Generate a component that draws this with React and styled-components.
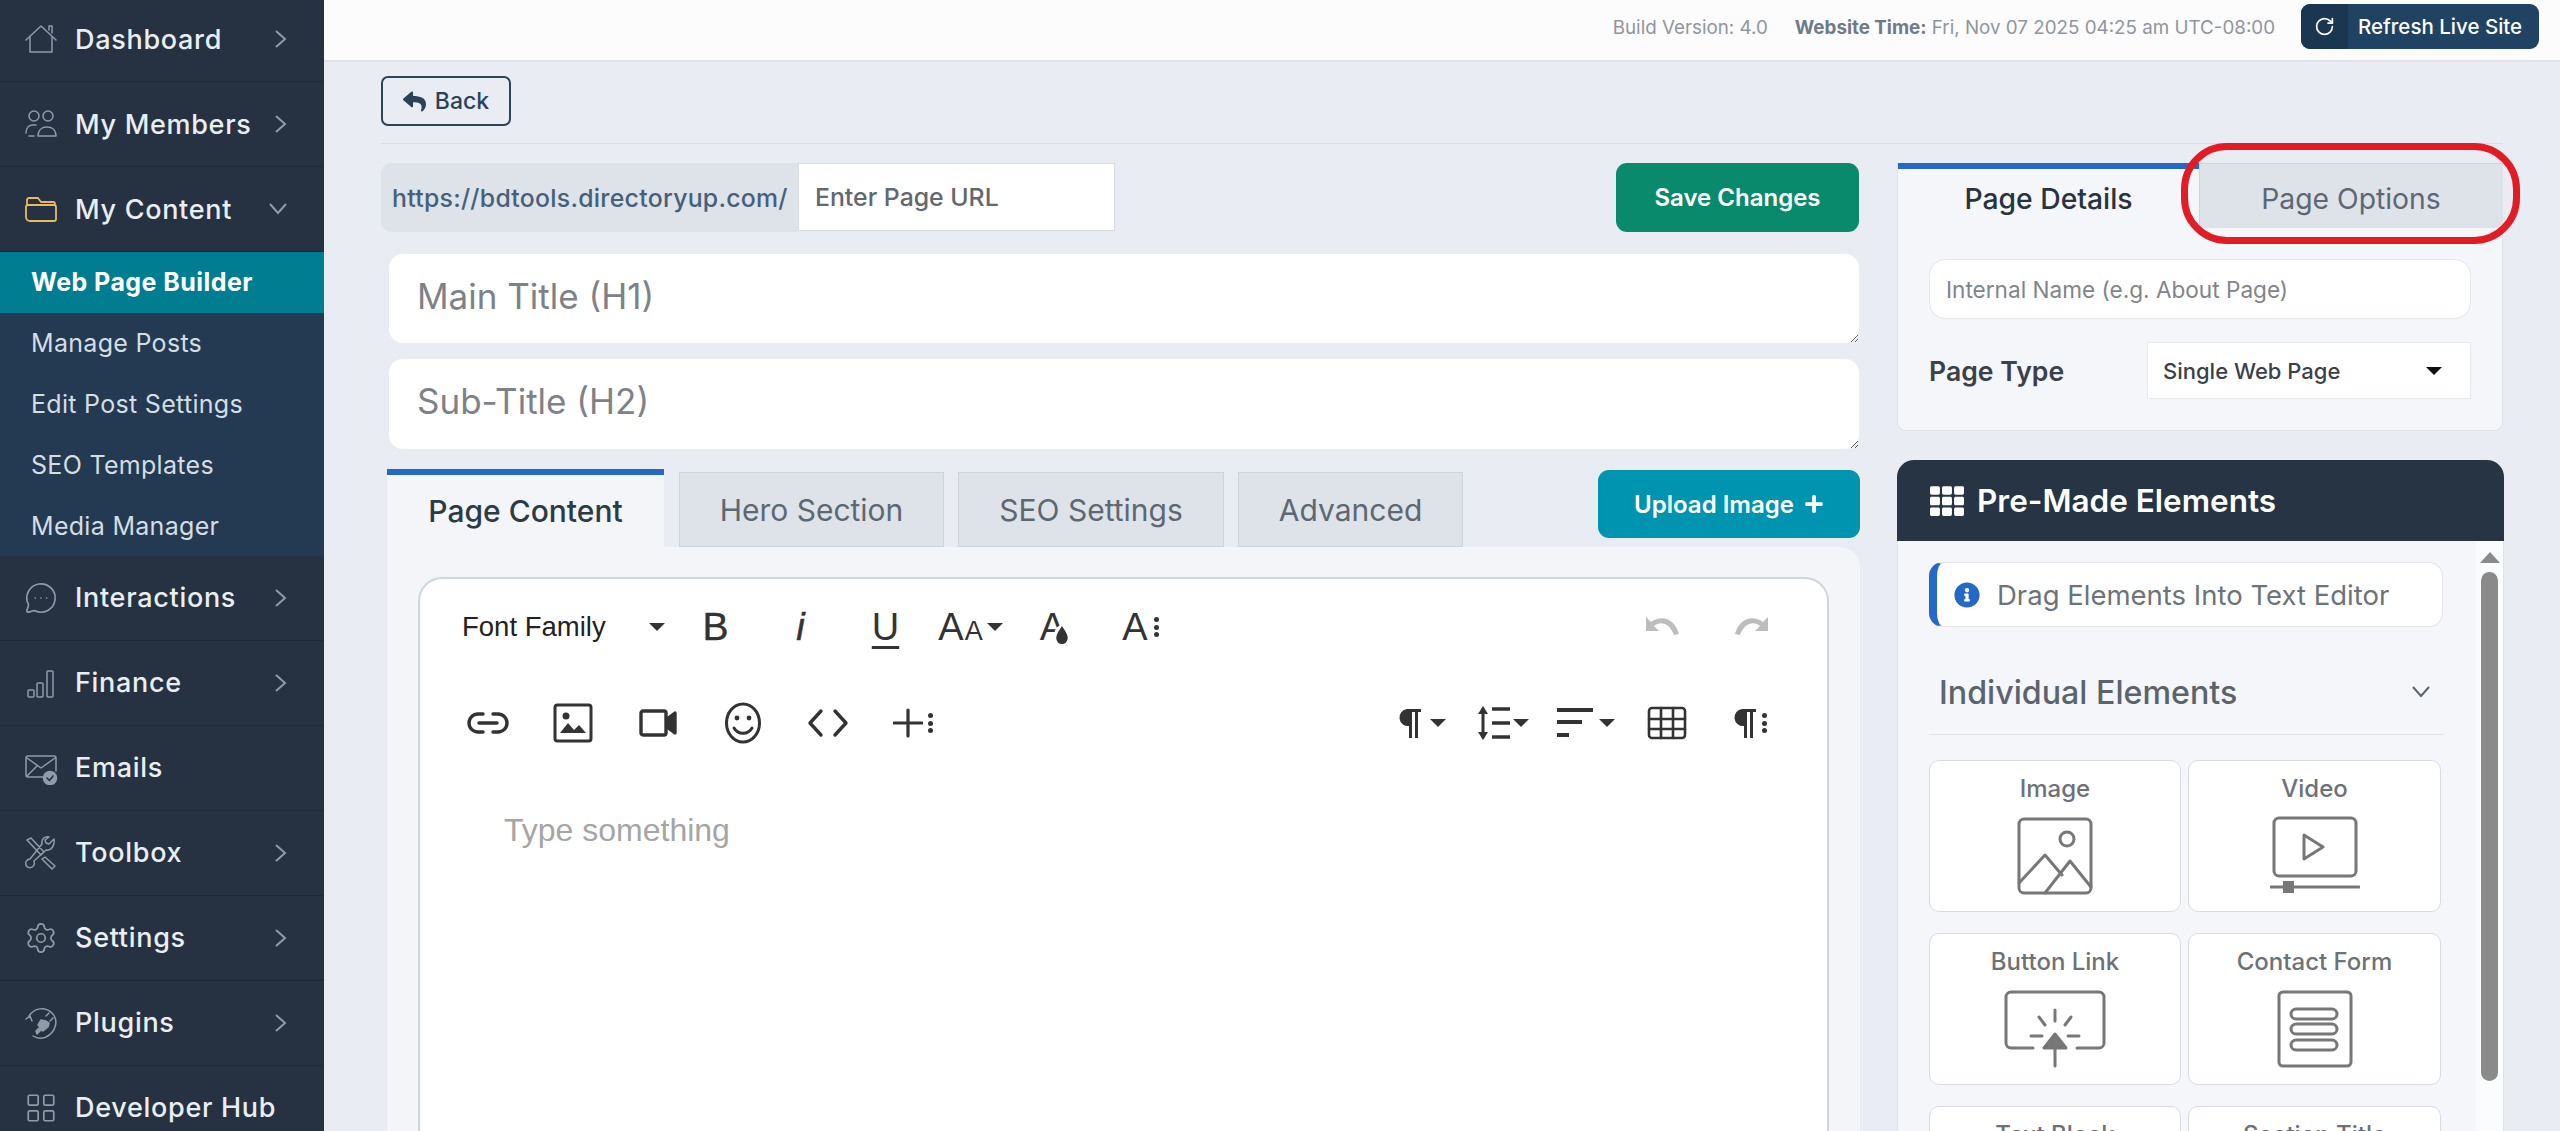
import React from "react";
import styled, { createGlobalStyle } from "styled-components";
import { FaReply, FaPlus, FaInfoCircle, FaTh } from "react-icons/fa";
import { Settings, MessageCircleMore, LayoutGrid, RotateCw } from "lucide-react";

const Global = createGlobalStyle`
  html, body { margin: 0; padding: 0; height: 100%; background: #e9edf3; }
  * { box-sizing: border-box; }
  body { font-family: Inter, "Noto Sans", sans-serif; overflow: hidden; }
`;

const Shell = styled.div`display: flex; height: 100vh; overflow: hidden;`;
const Sidebar = styled.nav`width: 324px; flex: none; background: #263241; overflow: hidden; display: flex; flex-direction: column;`;
const NavList = styled.div`margin-top: -3px; display: flex; flex-direction: column;`;
const NavRow = styled.div`
  height: 85px; flex: none; display: flex; align-items: center; padding: 0 37px 0 24px;
  border-bottom: 1px solid #1f2a37; color: #e9eef3; font-size: 27px; font-weight: 500; letter-spacing: .7px;
`;
const NavIcon = styled.span`
  width: 34px; height: 34px; flex: none; margin-right: 17px; display: flex; align-items: center; justify-content: center;
  color: ${p => p.$color || "#8f9ba7"};
`;
const NavLabel = styled.span`flex: 1; white-space: nowrap;`;
const SubNav = styled.div`background: #243a52; display: flex; flex-direction: column;`;
const SubItem = styled.div`
  height: 60.8px; display: flex; align-items: center; padding-left: 31px; white-space: nowrap;
  font-size: 25px; letter-spacing: ${p => p.$active ? ".45px" : ".3px"};
  color: ${p => p.$active ? "#ffffff" : "#d5dde4"}; font-weight: ${p => p.$active ? 700 : 400};
  background: ${p => p.$active ? "#007d90" : "transparent"};
`;

const Main = styled.div`flex: 1; min-width: 0; display: flex; flex-direction: column;`;
const TopBar = styled.header`
  height: 62px; flex: none; background: #fcfcfd; border-bottom: 2px solid #e0e3e8;
  display: flex; align-items: center; justify-content: flex-end; padding: 0 21px 6px 0;
  font-size: 18.8px; color: #8f969d; white-space: nowrap;
`;
const BuildInfo = styled.span`margin-right: 27px;`;
const TimeInfo = styled.span`margin-right: 26px;`;
const Strong = styled.b`font-weight: 700; color: #6f7a86;`;
const RefreshButton = styled.div`
  display: flex; height: 45px; width: 238px; border-radius: 9px; overflow: hidden; background: #204363; color: #fff;
  font-size: 20.5px; font-weight: 500; align-items: stretch; align-self: flex-start; margin-top: 4px;
`;
const RefreshIcon = styled.span`width: 47px; background: #1a3650; display: flex; align-items: center; justify-content: center;`;
const RefreshText = styled.span`flex: 1; display: flex; align-items: center; padding-left: 10px; white-space: nowrap;`;

const Body = styled.div`flex: 1; min-height: 0; display: flex; flex-direction: column; padding: 14px 57px 0;`;
const BackRow = styled.div`padding-bottom: 17px; border-bottom: 1px solid #d9dee4; flex: none;`;
const BackButton = styled.div`
  width: 130px; height: 50px; border: 2px solid #2c4357; border-radius: 7px; display: flex; align-items: center; justify-content: center;
  gap: 9px; color: #2c4357; font-size: 23px; font-weight: 500;
`;
const Columns = styled.div`flex: 1; min-height: 0; display: grid; grid-template-columns: 1478px 606px; column-gap: 38px; margin-top: 19px;`;
const LeftCol = styled.div`display: flex; flex-direction: column; min-height: 0;`;
const RightCol = styled.div`display: flex; flex-direction: column; min-height: 0;`;

const UrlRow = styled.div`display: flex; justify-content: space-between; height: 69px; flex: none;`;
const UrlGroup = styled.div`display: flex; height: 69px;`;
const UrlPrefix = styled.div`
  width: 417px; background: #dde3e9; border-radius: 10px 0 0 10px; display: flex; align-items: center; padding-left: 11px;
  color: #476079; font-size: 24.8px; font-weight: 500; letter-spacing: .27px; white-space: nowrap;
`;
const UrlInput = styled.input`
  width: 317px; height: 68px; border: 1px solid #d7dce2; background: #fff; padding: 0 16px; font: 500 24.8px Inter, sans-serif; outline: none;
  &::placeholder { color: #62686e; opacity: 1; }
`;
const SolidButton = styled.div`
  display: flex; align-items: center; justify-content: center; gap: 10px; border-radius: 11px; color: #fff; font-size: 24px; font-weight: 600;
  width: ${p => p.$w}px; height: ${p => p.$h}px; background: ${p => p.$bg}; white-space: nowrap; flex: none;
`;
const TitleField = styled.textarea`
  display: block; flex: none; width: 1470px; height: ${p => p.$h}px; margin: ${p => p.$mt}px 0 0 8px; border: none; border-radius: 14px; background: #fff;
  padding: 21px 28px; font: 400 35px Inter, sans-serif; resize: vertical; outline: none;
  &::placeholder { color: #7e8287; opacity: 1; }
`;
const TabRow = styled.div`display: flex; align-items: flex-start; justify-content: space-between; height: 77px; margin: 21px -1px 0 6px; flex: none;`;
const TabList = styled.div`display: flex; align-items: flex-end; gap: 14px; height: 77px;`;
const ContentTab = styled.div`
  width: ${p => p.$w}px; height: ${p => p.$active ? 78 : 75}px; display: flex; align-items: center; justify-content: center;
  font-size: 30px; font-weight: ${p => p.$active ? 500 : 400}; white-space: nowrap;
  background: ${p => p.$active ? "#f3f5f9" : "#dde3e9"}; color: ${p => p.$active ? "#2c3a46" : "#5d6872"};
  border: ${p => p.$active ? "none" : "1px solid #cdd5dc"}; border-top: ${p => p.$active ? "6px solid #2469c7" : "1px solid #cdd5dc"};
  margin-right: ${p => p.$active ? 1 : 0}px;
`;
const ContentCard = styled.div`flex: 1; min-height: 0; margin: 0 -1px 0 6px; background: #f3f5f9; border-radius: 0 20px 0 0; padding: 30px 31px 0; display: flex;`;
const Editor = styled.div`flex: 1; background: #fff; border: 2px solid #d0d5db; border-bottom: none; border-radius: 24px 24px 0 0;`;
const ToolRow = styled.div`display: flex; align-items: center; height: 96px; padding: 0 ${p => p.$right}px 0 25px; color: #333;`;
const Spacer = styled.div`flex: 1;`;
const Tool = styled.div`
  width: ${p => p.$w || 85}px; height: 60px; flex: none; display: flex; align-items: center; justify-content: center; gap: ${p => p.$gap ?? 5}px;
  color: ${p => p.$muted ? "#bdbdbd" : "#333"}; font-family: "Liberation Sans", Arial, sans-serif;
  font-size: 38px;
`;
const FontPick = styled.div`
  width: 228px; padding: 0 8px 0 17px; display: flex; justify-content: space-between; align-items: center; flex: none;
  font: 400 27.5px "Liberation Sans", Arial, sans-serif; color: #222;
`;
const Caret = styled.i`
  display: inline-block; width: 0; height: 0; border-left: 8px solid transparent; border-right: 8px solid transparent;
  border-top: 8px solid #333; flex: none;
`;
const BoldMark = styled.span`font-size: 39px; -webkit-text-stroke: .4px #333;`;
const ItalicMark = styled.span`font-style: italic; font-size: 38px; -webkit-text-stroke: .5px #333;`;
const UnderMark = styled.span`font-size: 38px; text-decoration: underline; text-underline-offset: 6px; text-decoration-thickness: 3px;`;
const SmallA = styled.span`font-size: 27px; margin-left: 1px;`;
const TightRow = styled.span`display: flex; align-items: baseline;`;
const CenterRow = styled.span`display: flex; align-items: center; gap: 4px;`;
const DropMark = styled.span`position: relative; display: block; line-height: 44px; padding-right: 6px;`;
const DropSpot = styled.span`position: absolute; left: 14px; top: 20px; display: flex; background: #fff; border-radius: 50%; padding: 0 1px;`;
const Dots = styled.span`display: flex; flex-direction: column; gap: 2.5px; margin-left: 1px;`;
const Dot = styled.i`display: block; width: 5px; height: 5px; border-radius: 50%; background: #333;`;
const EditorHint = styled.div`
  padding: 40px 0 0 84px; font: 400 32px/38px "Liberation Sans", Arial, sans-serif; color: #a5a5a5;
`;

const DetailsCard = styled.section`
  height: 268px; flex: none; position: relative; background: #f4f6f9; border: 1px solid #dfe3e8; border-top: none; border-radius: 0 0 8px 8px;
`;
const DetailTabs = styled.div`display: grid; grid-template-columns: 301px 1fr; height: 65px;`;
const DetailTab = styled.div`
  display: flex; align-items: center; justify-content: center; font-size: 28.3px; white-space: nowrap; font-weight: ${p => p.$active ? 500 : 400};
  color: ${p => p.$active ? "#27333e" : "#5d6872"}; background: ${p => p.$active ? "transparent" : "#dde3e9"};
  border-top: ${p => p.$active ? "6px solid #2469c7" : "1px solid #cdd5dc"};
  border-left: ${p => p.$active ? "none" : "1px solid #cdd5dc"};
  padding-top: ${p => p.$active ? 1 : 5}px;
`;
const Highlight = styled.div`
  position: absolute; left: 283px; top: -20px; width: 339px; height: 101px; border: 7px solid #e11c25; border-radius: 46px; pointer-events: none;
`;
const DetailBody = styled.div`padding: 31px 31px 0 31px; display: flex; flex-direction: column;`;
const NameInput = styled.input`
  width: 542px; height: 60px; border: 1px solid #e3e6ea; border-radius: 16px; background: #fff; padding: 0 16px; font: 400 22.6px Inter, sans-serif; outline: none;
  &::placeholder { color: #7f858a; opacity: 1; }
`;
const TypeRow = styled.div`display: flex; align-items: center; justify-content: space-between; margin-top: 23px; width: 542px;`;
const TypeLabel = styled.span`font-size: 26.6px; font-weight: 600; color: #3a4148;`;
const TypeSelect = styled.div`
  width: 324px; height: 57px; background: #fff; border: 1px solid #e6e9ed; display: flex; align-items: center; justify-content: space-between;
  padding: 0 28px 0 15px; font-size: 22px; font-weight: 500; color: #3a4148;
`;
const BlackCaret = styled(Caret)`border-top-color: #111;`;

const Panel = styled.section`flex: 1; min-height: 0; margin-top: 29px; display: flex; flex-direction: column; width: 607px;`;
const PanelHead = styled.div`
  height: 81px; flex: none; background: #263443; border-radius: 17px 17px 0 0; color: #fff; display: flex; align-items: center;
  padding-left: 33px; gap: 13px; font-size: 31.5px; font-weight: 600; white-space: nowrap;
`;
const PanelBody = styled.div`flex: 1; min-height: 0; display: flex; background: #f4f6f9; border-left: 1px solid #dfe3e8; border-right: 1px solid #dfe3e8; overflow: hidden;`;
const PanelContent = styled.div`flex: 1; min-width: 0; padding: 21px 34px 0 31px; display: flex; flex-direction: column; overflow: hidden;`;
const ScrollTrack = styled.div`width: 27px; flex: none; background: #fbfcfd; display: flex; flex-direction: column; align-items: center; padding-top: 11px;`;
const ScrollArrow = styled.i`width: 0; height: 0; border-left: 10px solid transparent; border-right: 10px solid transparent; border-bottom: 11px solid #8a8a8a;`;
const ScrollThumb = styled.div`width: 17px; height: 509px; margin-top: 9px; border-radius: 9px; background: #8a8a8a;`;
const InfoBox = styled.div`
  height: 65px; flex: none; width: 514px; background: #fff; border: 1px solid #e1e5ea; border-left: 8px solid #2469c7; border-radius: 14px; display: flex; align-items: center;
  padding-left: 17px; gap: 17px; color: #6c7379; font-size: 27.5px; white-space: nowrap;
`;
const SectionHead = styled.div`
  height: 108px; flex: none; width: 515px; border-bottom: 1px solid #dfe3e8; display: flex; align-items: center; justify-content: space-between;
  padding: 23px 14px 0 10px; font-size: 32.2px; font-weight: 500; color: #5b646d;
`;
const ElementGrid = styled.div`display: grid; grid-template-columns: 252px 253px; grid-auto-rows: 152px; column-gap: 7px; row-gap: 21px; margin-top: 25px;`;
const ElementCard = styled.div`
  background: #fff; border: 1px solid #d8dce1; border-radius: 10px; display: flex; flex-direction: column; align-items: center;
  font-size: 24px; font-weight: 500; color: #6c7278; padding-top: 13px; white-space: nowrap;
`;
const ElementIcon = styled.div`height: 80px; margin-top: 13px; display: flex; align-items: center; justify-content: center; color: #777;`;

const Ic = ({ w = 34, h = 34, vb, sw = 1.5, children, fill = "none" }) => (
  <svg width={w} height={h} viewBox={vb || `0 0 ${w} ${h}`} fill={fill} stroke={fill === "none" ? "currentColor" : "none"} strokeWidth={sw} strokeLinecap="round" strokeLinejoin="round">{children}</svg>
);

const HomeIcon = () => <Ic><path d="M2 18 17 4l15 14M6 15v15h22V15M25 8V4h3v7" /></Ic>;
const UsersIcon = () => <Ic><circle cx="10" cy="9" r="5" /><circle cx="24" cy="9" r="5" /><path d="M2 26c0-5 3-8 7-8h3M5 29h5M14 29c0-6 4-9 9-9s9 3 9 9z" /></Ic>;
const FolderIcon = () => <Ic sw={1.8}><path d="M3 12V8a2 2 0 0 1 2-2h9l3 4h12a2 2 0 0 1 2 2M2 15a2 2 0 0 1 2-2h26a2 2 0 0 1 2 2v12a2 2 0 0 1-2 2H6a4 4 0 0 1-4-4z" /></Ic>;
const BarsIcon = () => <Ic><rect x="4" y="24" width="6" height="7" rx="1" /><rect x="13" y="17" width="6" height="14" rx="1" /><rect x="23" y="5" width="6" height="26" rx="1" /></Ic>;
const MailIcon = () => (
  <Ic><path d="M22 26H4a2 2 0 0 1-2-2V7a2 2 0 0 1 2-2h26a2 2 0 0 1 2 2v13M3 7l14 10L31 7M3 25l10-10" /><circle cx="26" cy="27" r="6.5" fill="currentColor" /><path d="m23 27 2.5 2.5L29 25" stroke="#263241" strokeWidth="1.6" /></Ic>
);
const ToolsIcon = () => (
  <Ic><path d="M3 4 7 2l13 14-3 3zM30 3l-5 5-3-1-1-3 4-3c-4-1-8 2-7 7L6 23c-3 0-5 3-4 6s6 4 8 0c1-2 0-3 0-4L22 14c5 1 9-4 8-11zM21 21l10 9-3 3-10-10z" /></Ic>
);
const PlugIcon = () => (
  <Ic><path d="M5 10C10 2 21 0 28 7c7 7 4 19-6 24-5 2-10 1-13-1M2 13l4-3 2 5" /><path d="m12 25 4-4-2-2 3-5 5 1 3 2-1 4-5 4-2-1-4 4z" fill="currentColor" /><path d="m22 10 3-3M26 15l3-3" /></Ic>
);
const Chevron = ({ down, color = "#8f9ba7" }) => (
  <svg width={down ? 18 : 12} height={down ? 12 : 18} viewBox={down ? "0 0 18 12" : "0 0 12 18"} fill="none" stroke={color} strokeWidth="2">
    <path d={down ? "M1 1l8 9 8-9" : "M1 1l9 8-9 8"} />
  </svg>
);

const navTop = [
  ["Dashboard", <HomeIcon />, true],
  ["My Members", <UsersIcon />, true],
];
const navBottom = [
  ["Interactions", <MessageCircleMore size={36} strokeWidth={1.2} />, true],
  ["Finance", <BarsIcon />, true],
  ["Emails", <MailIcon />, false],
  ["Toolbox", <ToolsIcon />, true],
  ["Settings", <Settings size={34} strokeWidth={1.2} />, true],
  ["Plugins", <PlugIcon />, true],
  ["Developer Hub", <LayoutGrid size={34} strokeWidth={1.2} />, false],
];
const subItems = ["Web Page Builder", "Manage Posts", "Edit Post Settings", "SEO Templates", "Media Manager"];

const Row = ({ label, icon, arrow, color, down }) => (
  <NavRow>
    <NavIcon $color={color}>{icon}</NavIcon>
    <NavLabel>{label}</NavLabel>
    {arrow && <Chevron down={down} />}
  </NavRow>
);

const MoreDots = () => <Dots><Dot /><Dot /><Dot /></Dots>;

const Pilcrow = () => <svg width="24" height="30" viewBox="0 0 24 30" fill="currentColor"><path d="M10 1h14v3h-3v26h-3V4h-3v26h-3V18a8.5 8.5 0 0 1-2-17z" /></svg>;
const ImageTool = () => <Ic w={42} h={42} sw={3}><rect x="3" y="3" width="36" height="36" rx="2.5" /><circle cx="14" cy="14" r="2" fill="currentColor" /><path d="M8 31l8-10 6 7 5-5 7 8z" fill="currentColor" stroke="none" /></Ic>;
const LinkTool = () => <Ic w={42} h={26} sw={3.4}><path d="M16 4H11a9 9 0 0 0 0 18h5M26 4h5a9 9 0 0 1 0 18h-5M12 13h18" /></Ic>;
const VideoTool = () => <Ic w={38} h={30} sw={3.4}><rect x="2" y="3" width="25" height="24" rx="2" /><path d="M28 11l8-6v20l-8-6z" fill="currentColor" /></Ic>;
const SmileTool = () => <Ic w={38} h={44} sw={3}><ellipse cx="19" cy="22" rx="16.5" ry="19" /><circle cx="13" cy="17" r="2.4" fill="currentColor" stroke="none" /><circle cx="25" cy="17" r="2.4" fill="currentColor" stroke="none" /><path d="M10 27c4 7 14 7 18 0" /></Ic>;
const CodeTool = () => <Ic w={42} h={30} sw={3.4}><path d="M14 3 3 15l11 12M28 3l11 12-11 12" /></Ic>;
const PlusTool = () => <CenterRow><Ic w={30} h={30} sw={3.2}><path d="M15 2v26M1 15h28" /></Ic><MoreDots /></CenterRow>;
const LineTool = () => <Ic w={34} h={36} sw={3}><path d="M6 4v28" /><path d="M1 9l5-8 5 8zM1 27l5 8 5-8z" fill="currentColor" stroke="none" /><path d="M15 4h18M15 18h18M15 32h18" strokeLinecap="butt" strokeWidth="3.6" /></Ic>;
const AlignTool = () => <Ic w={38} h={34} sw={3.8}><path d="M1 4h36M1 16h25M1 29h12" strokeLinecap="butt" /></Ic>;
const TableTool = () => <Ic w={40} h={34} sw={2.6}><rect x="2" y="2" width="36" height="30" rx="3" /><path d="M2 13h36M2 23h36M14 2v30M26 2v30" /></Ic>;
const UndoTool = ({ flip }) => (
  <svg width="36" height="24" viewBox="0 0 36 24" fill="currentColor" style={flip ? { transform: "scaleX(-1)" } : undefined}>
    <path d="M1 2v14h13l-5-5c6-5 15-4 20 9l5-1C30 4 17-1 6 7z" />
  </svg>
);
const PictureCard = () => <Ic w={76} h={78} sw={3}><rect x="2" y="2" width="72" height="74" rx="5" /><circle cx="50" cy="22" r="7" /><path d="M2 66l26-28 17 20M28 76l25-32 21 26" /></Ic>;
const VideoCard = () => <Ic w={90} h={80} sw={3}><rect x="4" y="2" width="82" height="58" rx="5" /><path d="M34 19l19 12-19 12zM1 71h88" /><rect x="13" y="65" width="11" height="12" fill="currentColor" stroke="none" /></Ic>;
const ButtonCard = () => <Ic w={104} h={78} sw={3}><path d="M30 58H8a5 5 0 0 1-5-5V7a5 5 0 0 1 5-5h88a5 5 0 0 1 5 5v46a5 5 0 0 1-5 5H74M52 20v11M36 27l6 8M68 27l-6 8M28 46h11M65 46h11M52 76V54" /><path d="m41 58 11-14 11 14z" fill="currentColor" /></Ic>;
const FormCard = () => <Ic w={76} h={78} sw={3}><rect x="2" y="2" width="72" height="74" rx="4" /><rect x="14" y="19" width="46" height="10" rx="5" /><rect x="14" y="34" width="46" height="10" rx="5" /><rect x="14" y="50" width="46" height="10" rx="5" /></Ic>;

export default function App() {
  return (
    <>
      <Global />
      <Shell>
        <Sidebar>
          <NavList>
            {navTop.map(([l, i, a]) => <Row key={l} label={l} icon={i} arrow={a} />)}
            <Row label="My Content" icon={<FolderIcon />} arrow down color="#e6bb62" />
            <SubNav>
              {subItems.map((s, i) => <SubItem key={s} $active={i === 0}>{s}</SubItem>)}
            </SubNav>
            {navBottom.map(([l, i, a]) => <Row key={l} label={l} icon={i} arrow={a} />)}
          </NavList>
        </Sidebar>
        <Main>
          <TopBar>
            <BuildInfo>Build Version: 4.0</BuildInfo>
            <TimeInfo><Strong>Website Time:</Strong> Fri, Nov 07 2025 04:25 am UTC-08:00</TimeInfo>
            <RefreshButton>
              <RefreshIcon><RotateCw size={21} strokeWidth={2} /></RefreshIcon>
              <RefreshText>Refresh Live Site</RefreshText>
            </RefreshButton>
          </TopBar>
          <Body>
            <BackRow>
              <BackButton><FaReply size={23} /> Back</BackButton>
            </BackRow>
            <Columns>
              <LeftCol>
                <UrlRow>
                  <UrlGroup>
                    <UrlPrefix>https://bdtools.directoryup.com/</UrlPrefix>
                    <UrlInput placeholder="Enter Page URL" />
                  </UrlGroup>
                  <SolidButton $w={243} $h={69} $bg="#0a8a6c">Save Changes</SolidButton>
                </UrlRow>
                <TitleField $h={89} $mt={22} placeholder="Main Title (H1)" />
                <TitleField $h={90} $mt={16} placeholder="Sub-Title (H2)" />
                <TabRow>
                  <TabList>
                    <ContentTab $w={277} $active>Page Content</ContentTab>
                    <ContentTab $w={265}>Hero Section</ContentTab>
                    <ContentTab $w={266}>SEO Settings</ContentTab>
                    <ContentTab $w={225}>Advanced</ContentTab>
                  </TabList>
                  <SolidButton $w={262} $h={68} $bg="#0094b0">Upload Image <FaPlus size={20} /></SolidButton>
                </TabRow>
                <ContentCard>
                  <Editor>
                    <ToolRow $right={32}>
                      <FontPick>Font Family <Caret /></FontPick>
                      <Tool><BoldMark>B</BoldMark></Tool>
                      <Tool><ItalicMark>i</ItalicMark></Tool>
                      <Tool><UnderMark>U</UnderMark></Tool>
                      <Tool $gap={4}><TightRow>A<SmallA>A</SmallA></TightRow><Caret /></Tool>
                      <Tool>
                        <DropMark>A<DropSpot><Ic w={14} h={21} vb="0 0 14 22" fill="#333"><path d="M7 1c3 5 6 8 6 13a6 6 0 0 1-12 0C1 9 4 6 7 1z" fill="#333" /></Ic></DropSpot></DropMark>
                      </Tool>
                      <Tool><TightRow>A</TightRow><MoreDots /></Tool>
                      <Spacer />
                      <Tool $w={88} $muted><UndoTool /></Tool>
                      <Tool $w={88} $muted><UndoTool flip /></Tool>
                    </ToolRow>
                    <ToolRow $right={36}>
                      <Tool><LinkTool /></Tool>
                      <Tool><ImageTool /></Tool>
                      <Tool><VideoTool /></Tool>
                      <Tool><SmileTool /></Tool>
                      <Tool><CodeTool /></Tool>
                      <Tool><PlusTool /></Tool>
                      <Spacer />
                      <Tool $w={80} $gap={9}><Pilcrow /><Caret /></Tool>
                      <Tool $w={84} $gap={2}><LineTool /><Caret /></Tool>
                      <Tool $w={80} $gap={5}><AlignTool /><Caret /></Tool>
                      <Tool $w={83}><TableTool /></Tool>
                      <Tool $w={83}><Pilcrow /><MoreDots /></Tool>
                    </ToolRow>
                    <EditorHint>Type something</EditorHint>
                  </Editor>
                </ContentCard>
              </LeftCol>
              <RightCol>
                <DetailsCard>
                  <DetailTabs>
                    <DetailTab $active>Page Details</DetailTab>
                    <DetailTab>Page Options</DetailTab>
                  </DetailTabs>
                  <Highlight />
                  <DetailBody>
                    <NameInput placeholder="Internal Name (e.g. About Page)" />
                    <TypeRow>
                      <TypeLabel>Page Type</TypeLabel>
                      <TypeSelect>Single Web Page <BlackCaret /></TypeSelect>
                    </TypeRow>
                  </DetailBody>
                </DetailsCard>
                <Panel>
                  <PanelHead><FaTh size={34} /> Pre-Made Elements</PanelHead>
                  <PanelBody>
                    <PanelContent>
                      <InfoBox><FaInfoCircle size={26} color="#2469c7" /> Drag Elements Into Text Editor</InfoBox>
                      <SectionHead>Individual Elements <Chevron down color="#5b646d" /></SectionHead>
                      <ElementGrid>
                        <ElementCard>Image<ElementIcon><PictureCard /></ElementIcon></ElementCard>
                        <ElementCard>Video<ElementIcon><VideoCard /></ElementIcon></ElementCard>
                        <ElementCard>Button Link<ElementIcon><ButtonCard /></ElementIcon></ElementCard>
                        <ElementCard>Contact Form<ElementIcon><FormCard /></ElementIcon></ElementCard>
                        <ElementCard>Text Block</ElementCard>
                        <ElementCard>Section Title</ElementCard>
                      </ElementGrid>
                    </PanelContent>
                    <ScrollTrack><ScrollArrow /><ScrollThumb /></ScrollTrack>
                  </PanelBody>
                </Panel>
              </RightCol>
            </Columns>
          </Body>
        </Main>
      </Shell>
    </>
  );
}
